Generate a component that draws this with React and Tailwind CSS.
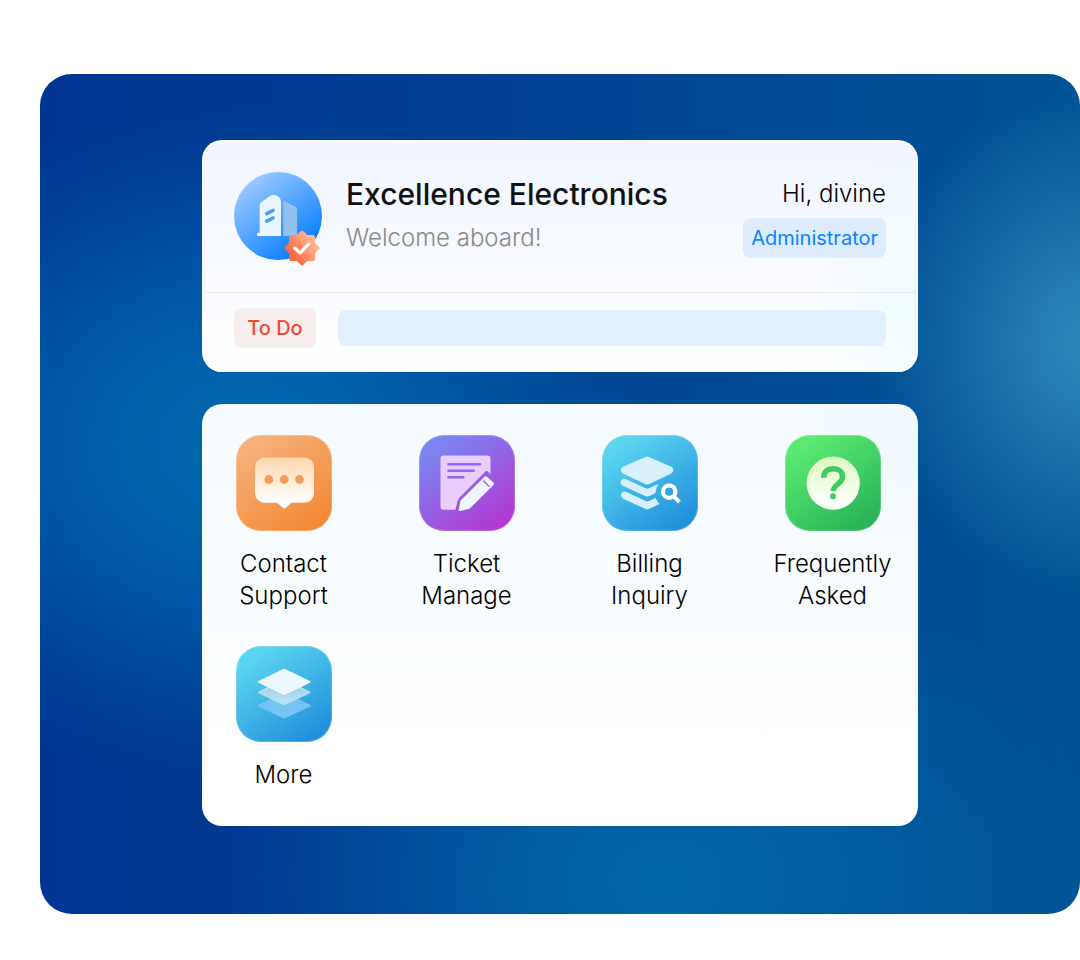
import { useId } from 'react';

function Tile({ from, to, children }) {
  const id = useId();
  return (
    <svg viewBox="0 0 96 96" className="w-24 h-24" aria-hidden="true">
      <defs>
        <linearGradient id={id} x1="0.2" y1="0.1" x2="0.8" y2="0.95">
          <stop offset="0" stopColor={from} />
          <stop offset="1" stopColor={to} />
        </linearGradient>
      </defs>
      <rect width="96" height="96" rx="25" fill={`url(#${id})`} />
      <rect x="0.5" y="0.5" width="95" height="95" rx="24.5" fill="none" stroke="#fff" strokeOpacity="0.2" />
      {children}
    </svg>
  );
}

function ContactIcon() {
  return (
    <Tile from="#f6b079" to="#f38935">
      <defs>
        <linearGradient id="bubble" x1="0" y1="0" x2="0" y2="1">
          <stop offset="0" stopColor="#fed6ad" />
          <stop offset="0.9" stopColor="#fff" />
        </linearGradient>
      </defs>
      <path
        d="M28.500 22.500h40a9.500 9.500 0 0 1 9.500 9.500v26.300a9.500 9.500 0 0 1-9.500 9.500H55.500l-6 5.200q-1.200 1-2.400 0l-6-5.200H28.500a9.500 9.500 0 0 1-9.500-9.500V32a9.500 9.500 0 0 1 9.500-9.500z"
        fill="url(#bubble)"
      />
      <g fill="#f69c56">
        <circle cx="32.8" cy="44.5" r="4.4" />
        <circle cx="48.2" cy="44.5" r="4.4" />
        <circle cx="63.5" cy="44.5" r="4.4" />
      </g>
    </Tile>
  );
}

function TicketIcon() {
  return (
    <Tile from="#7b85f2" to="#b139d3">
      <path
        d="M24.5 20.5h44a3 3 0 0 1 3 3v15.8l-3-3q-.9-.9-1.8 0L40.600 62.400q-1.500 1.600-2 3.600l-2.200 8.800H24.500a3 3 0 0 1-3-3V23.500a3 3 0 0 1 3-3z"
        fill="#e8cdfd"
      />
      <path d="M29.500 29.200h31.500M29.500 35.800h25M29.500 42.200h14.800" stroke="#9168e5" strokeWidth="2.600" strokeLinecap="round" />
      <path
        d="M41.300 66.500q.2-1 1-1.800L65.500 41.800q1.200-1.100 2.400 0l6.600 5.800q1.200 1.100 0 2.300L51.300 73q-.8.8-1.800 1l-8.600 1.900q-1.400.2-1.200-1.200z"
        fill="#edf6ff"
      />
      <path d="M64.200 45.500l6.300 6.300" stroke="#9a5be0" strokeWidth="1.300" />
    </Tile>
  );
}

function BillingIcon() {
  return (
    <Tile from="#5ad5f0" to="#2290dc">
      <g fill="#d7f0fb">
        <path d="M43.500 21.900q1.700-.8 3.400 0l22.400 9.800q4.400 3.100 0 6.800L46.900 49.200q-1.700.8-3.400 0L21 38.500q-4.600-3.600 0-6.800z" />
        <path d="M24.200 44.200l19.400 9.100q1.600.7 3.200 0l10-4.600q-3 4.400-3.500 9.500l-6.500 3q-1.600.7-3.200 0L20.300 50.600c-4-3.500-.4-8.500 3.900-6.400z" />
        <path d="M24.500 57l19.100 9.100q1.600.7 3.200 0l6.900-3.200q1 3.400 4 6.200l-10.900 5q-1.600.7-3.200 0L20.600 63.500c-3.700-3.500-.4-8.500 3.900-6.500z" />
      </g>
      <circle cx="67.200" cy="56.700" r="6.200" fill="none" stroke="#fff" strokeWidth="4.200" />
      <path d="M71.500 61.200l6 6" stroke="#fff" strokeWidth="4" />
    </Tile>
  );
}

function FaqIcon() {
  return (
    <Tile from="#5aea72" to="#2ab357">
      <defs>
        <linearGradient id="disc" x1="0" y1="0" x2="0" y2="1">
          <stop offset="0" stopColor="#dcf9bd" />
          <stop offset="0.85" stopColor="#fcfff8" />
        </linearGradient>
      </defs>
      <circle cx="48.200" cy="48.200" r="26.600" fill="url(#disc)" />
      <path
        d="M38.600 42.800c0-5.700 4-9.100 9.600-9.100 5.800 0 9.300 3.400 9.300 8 0 3.400-1.900 5.300-4.600 7.400-3 2.300-4.700 3.700-4.700 7"
        fill="none"
        stroke="#3fca62"
        strokeWidth="5.400"
      />
      <circle cx="48" cy="61.200" r="2.900" fill="#3fca62" />
    </Tile>
  );
}

function MoreIcon() {
  return (
    <Tile from="#5ad5f0" to="#2290dc">
      <defs>
        <linearGradient id="layer" x1="0" y1="0" x2="0" y2="1">
          <stop offset="0" stopColor="#8fcbe5" />
          <stop offset="1" stopColor="#bfe6f5" />
        </linearGradient>
      </defs>
      <g strokeLinejoin="round" strokeWidth="2">
        <path d="M48.200 47.500l25.300 12.100-25.300 12.100-25.300-12.100z" fill="#76c4f1" stroke="#76c4f1" />
        <path d="M48.200 34.200l25.300 12.100-25.300 12.100-25.300-12.100z" fill="url(#layer)" stroke="#b3dff1" />
        <path d="M48.200 23.700l25.300 12.200-25.300 12.300-25.300-12.300z" fill="#eaf7ff" stroke="#eff9ff" />
      </g>
    </Tile>
  );
}

function CompanyLogo() {
  return (
    <svg viewBox="0 0 88 96" className="w-22 h-24 -mb-2 shrink-0" role="img" aria-label="Verified company">
      <defs>
        <linearGradient id="avatar" x1="0.15" y1="0.1" x2="0.75" y2="0.9">
          <stop offset="0" stopColor="#9dcaff" />
          <stop offset="1" stopColor="#0b80ff" />
        </linearGradient>
        <linearGradient id="badge" x1="0.9" y1="0.2" x2="0.1" y2="0.8">
          <stop offset="0" stopColor="#ffc09a" />
          <stop offset="1" stopColor="#ff6034" />
        </linearGradient>
      </defs>
      <circle cx="44" cy="44" r="44" fill="url(#avatar)" />
      <path d="M49.300 30.200q0-1.900 1.700-1l10.700 5.700q1.400.8 1.400 2.400V64H49.300z" fill="#93c2f1" />
      <path
        d="M25.700 60.700V33.500q0-2 1.500-3.200l7.300-5.400c6-4 12.500-1 12.500 5.600V64H24a1 1 0 0 1-1-1v-1.300a1 1 0 0 1 1-1z"
        fill="#e9f6ff"
      />
      <path d="M32.800 41.700l6.200-3.200M32.800 49.200l6.200-3.200" stroke="#4c9df6" strokeWidth="3.600" strokeLinecap="round" />
      <path
        d="M68 60l4 3.900q.6.600 1.400.6h5.300q.8 0 .8.800v5.300q0 .8.600 1.400L84 76l-3.900 4q-.6.600-.6 1.400v5.300q0 .8-.8.800h-5.300q-.8 0-1.400.6L68 92l-4-3.900q-.6-.6-1.400-.6h-5.300q-.8 0-.8-.8v-5.300q0-.8-.6-1.400L52 76l3.900-4q.6-.6.6-1.400v-5.300q0-.8.8-.8h5.300q.8 0 1.400-.6z"
        fill="url(#badge)"
        stroke="url(#badge)"
        strokeWidth="3"
        strokeLinejoin="round"
      />
      <path d="M60.800 76.200l5.400 4.700 8.400-8.700" fill="none" stroke="#fff" strokeWidth="3.200" strokeLinecap="round" strokeLinejoin="round" />
    </svg>
  );
}

const actions = [
  { first: 'Contact', second: 'Support', Icon: ContactIcon },
  { first: 'Ticket', second: 'Manage', Icon: TicketIcon },
  { first: 'Billing', second: 'Inquiry', Icon: BillingIcon },
  { first: 'Frequently', second: 'Asked', Icon: FaqIcon },
  { first: 'More', Icon: MoreIcon },
];

export default function App() {
  return (
    <div className="min-h-screen bg-white pl-10 pt-[74px] pb-[46px] font-['Inter',sans-serif] text-black">
      <main className="rounded-[32px] px-[162px] pt-[66px] pb-[88px] flex flex-col gap-8 bg-[#003f95] bg-[radial-gradient(ellipse_220px_250px_at_101%_32%,#2d87ba_0%,#2d87bacc_25%,#2d87ba66_60%,#2d87ba00_100%),radial-gradient(ellipse_440px_330px_at_60%_96%,#0067a8_0%,#0067a8b3_35%,#0067a84d_70%,#0067a800_100%),radial-gradient(ellipse_420px_340px_at_19%_44%,#0066ae_0%,#0066aee6_25%,#0066ae80_60%,#0066ae26_85%,#0066ae00_100%),linear-gradient(90deg,#003594_0%,#003a92_25%,#004894_65%,#005494_100%)]">
        <section className="rounded-[20px] border-2 border-b-0 border-white bg-white bg-[radial-gradient(ellipse_100px_160px_at_100%_70%,#effcff_0%,#effcff00_100%),linear-gradient(180deg,#f0f5ff_0%,#ffffff_100%)]">
          <div className="flex items-start gap-6 px-[30px] pt-[30px] pb-8">
            <CompanyLogo />
            <div className="flex-1">
              <h1 className="text-[30px] leading-[44px] font-medium text-[#111]">Excellence Electronics</h1>
              <p className="text-2xl leading-[44px] font-light text-[#888]">Welcome aboard!</p>
            </div>
            <div className="flex flex-col items-end">
              <p className="text-2xl leading-[44px] font-light">Hi, divine</p>
              <span className="mt-[2px] rounded-lg bg-[#deecff] px-2 text-xl leading-10 text-[#0b84ff]">
                Administrator
              </span>
            </div>
          </div>
          <div className="flex items-center gap-[22px] border-t border-[#e6eaf0] px-[30px] pt-[15px] pb-6">
            <span className="min-w-[82px] rounded-lg bg-[#f7eded] px-3 text-center text-xl leading-10 font-medium text-[#f04a35]">
              To Do
            </span>
            <div className="h-9 flex-1 rounded-lg bg-[#e1f0ff]" />
          </div>
        </section>

        <nav
          aria-label="Services"
          className="grid grid-cols-4 gap-x-16 gap-y-[34px] rounded-[20px] bg-white bg-[radial-gradient(circle_at_100%_0%,#eff8ff_0,#eff8ff00_160px),linear-gradient(180deg,#f5faff_0%,#f9fdff_45%,#ffffff_80%)] pl-[22px] pr-[26px] pt-[31px] pb-[35px]"
        >
          {actions.map(({ first, second, Icon }) => (
            <button key={first} type="button" className="flex flex-col items-center gap-[17px] text-2xl leading-8 font-light">
              <Icon />
              <span>
                {first}
                {second && <br />}
                {second}
              </span>
            </button>
          ))}
        </nav>
      </main>
    </div>
  );
}
